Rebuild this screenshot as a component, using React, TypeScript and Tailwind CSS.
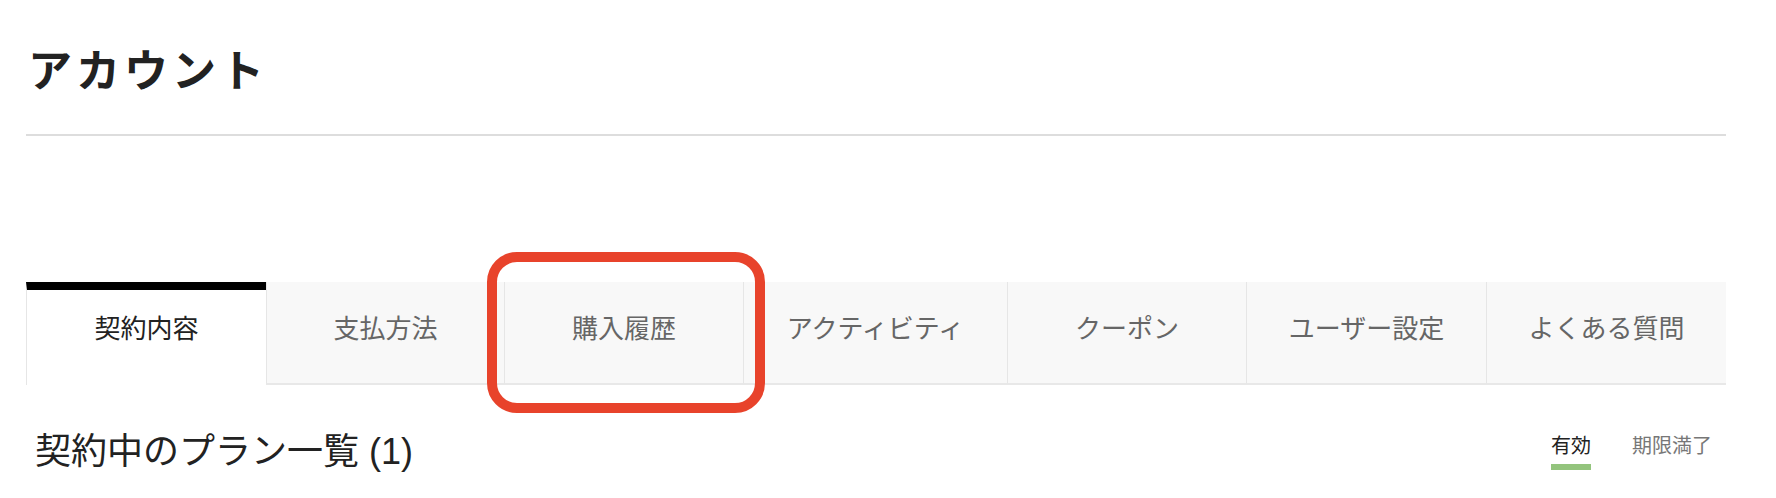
import React from "react";

const font = { fontFamily: '"Liberation Sans", "Noto Sans CJK JP", sans-serif' };

const tabs = [
  { label: "契約内容", width: "w-[240px]", active: true },
  { label: "支払方法", width: "w-[238px]" },
  { label: "購入履歴", width: "w-[239px]" },
  { label: "アクティビティ", width: "w-[264px]" },
  { label: "クーポン", width: "w-[239px]" },
  { label: "ユーザー設定", width: "w-[240px]" },
  { label: "よくある質問", width: "w-[240px]" },
];

const Tab = ({ label, width, active }: { label: string; width: string; active?: boolean }) =>
  active ? (
    <div
      className={`${width} h-[103px] flex justify-center bg-white border-t-[8px] border-t-black border-l border-l-[#e6e6e6] pt-[26px] text-[26px] leading-[26px] text-[#222]`}
    >
      {label}
    </div>
  ) : (
    <div
      className={`${width} h-[103px] flex justify-center bg-[#f8f8f8] border-l border-l-[#e6e6e6] border-b-2 border-b-[#e8e8e8] pt-[34px] text-[26px] leading-[26px] text-[#666]`}
    >
      {label}
    </div>
  );

const App = () => (
  <div className="w-[1776px] h-[498px] bg-white overflow-hidden" style={font}>
    <div className="pt-[50px] pl-[26px] w-[1726px]">
      <h1 className="pl-[2px] text-[44px] leading-[44px] font-bold tracking-[4px] text-[#222]">
        アカウント
      </h1>
      <div className="mt-[40px] h-[2px] bg-[#dddddd]" />

      <div className="relative mt-[146px] flex">
        {tabs.map((t) => (
          <Tab key={t.label} {...t} />
        ))}
        {/* annotation box around 購入履歴 */}
        <div className="absolute left-[461px] top-[-30px] w-[278px] h-[161px] rounded-[30px] border-[10px] border-[#e8432b]" />
      </div>

      <div className="mt-[49px] flex justify-between items-start">
        <h2 className="pl-[9px] text-[36px] leading-[36px] text-[#222]">契約中のプラン一覧 (1)</h2>
        <div className="mt-[2px] mr-[14px] flex gap-[41px] text-[20px] leading-[20px]">
          <span className="pb-[8px] border-b-[6px] border-b-[#93c47d] text-[#222]">有効</span>
          <span className="text-[#777]">期限満了</span>
        </div>
      </div>
    </div>
  </div>
);

export default App;
